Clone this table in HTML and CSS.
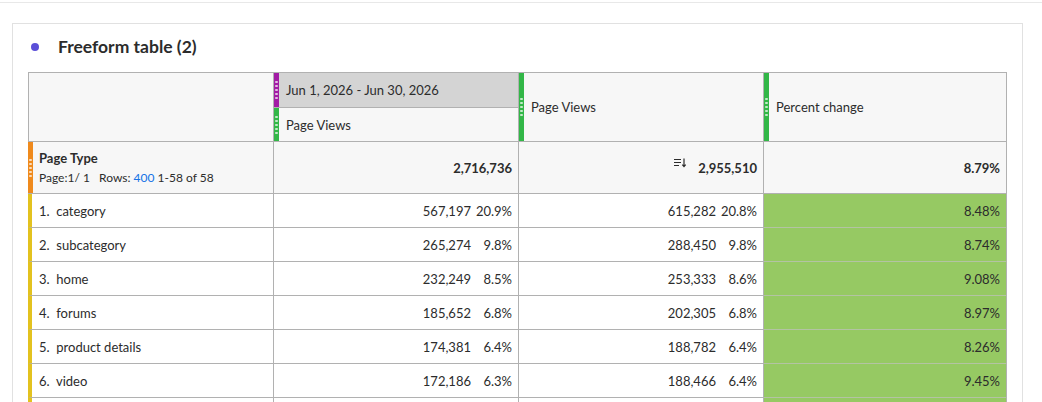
FILE: index.html
```html
<!DOCTYPE html>
<html>
<head>
<meta charset="utf-8">
<link rel="stylesheet" href="styles.css">
</head>
<body>
<div class="topline"></div>
<section class="panel">
  <header class="panel-head">
    <span class="dot"></span>
    <h2 class="title">Freeform table (2)</h2>
  </header>
  <div class="grid">
    <div class="cell corner"></div>
    <div class="cell hdr date"><span class="handle purple"><span class="dots"></span></span><span class="label">Jun 1, 2026 - Jun 30, 2026</span></div>
    <div class="cell hdr span2"><span class="handle green"><span class="dots"></span></span><span class="label">Page Views</span></div>
    <div class="cell hdr span2"><span class="handle green"><span class="dots"></span></span><span class="label">Percent change</span></div>
    <div class="cell hdr"><span class="handle green"><span class="dots"></span></span><span class="label">Page Views</span></div>

    <div class="cell dim"><span class="handle orange"><span class="dots"></span></span>
      <div class="dim-text">
        <div class="dim-name">Page Type</div>
        <div class="dim-meta">Page:1/ 1&nbsp;&nbsp; Rows: <span class="link">400</span> 1-58 of 58</div>
      </div>
    </div>
    <div class="cell total">2,716,736</div>
    <div class="cell total"><svg class="sort" width="13" height="10" viewBox="0 0 13 10"><path d="M0 1.5h7M0 4.5h7M0 7.5h5" stroke="#2c2c2c" stroke-width="1.2"/><path d="M10 0.5v8M8.3 6.6l1.7 2 1.7-2" stroke="#2c2c2c" stroke-width="1.2" fill="none"/></svg>2,955,510</div>
    <div class="cell total">8.79%</div>

    <div class="cell item">1.&nbsp; category</div>
    <div class="cell num">567,197<span class="pct">20.9%</span></div>
    <div class="cell num">615,282<span class="pct">20.8%</span></div>
    <div class="cell change">8.48%</div>

    <div class="cell item">2.&nbsp; subcategory</div>
    <div class="cell num">265,274<span class="pct">9.8%</span></div>
    <div class="cell num">288,450<span class="pct">9.8%</span></div>
    <div class="cell change">8.74%</div>

    <div class="cell item">3.&nbsp; home</div>
    <div class="cell num">232,249<span class="pct">8.5%</span></div>
    <div class="cell num">253,333<span class="pct">8.6%</span></div>
    <div class="cell change">9.08%</div>

    <div class="cell item">4.&nbsp; forums</div>
    <div class="cell num">185,652<span class="pct">6.8%</span></div>
    <div class="cell num">202,305<span class="pct">6.8%</span></div>
    <div class="cell change">8.97%</div>

    <div class="cell item">5.&nbsp; product details</div>
    <div class="cell num">174,381<span class="pct">6.4%</span></div>
    <div class="cell num">188,782<span class="pct">6.4%</span></div>
    <div class="cell change">8.26%</div>

    <div class="cell item">6.&nbsp; video</div>
    <div class="cell num">172,186<span class="pct">6.3%</span></div>
    <div class="cell num">188,466<span class="pct">6.4%</span></div>
    <div class="cell change">9.45%</div>

    <div class="cell item"></div>
    <div class="cell num"></div>
    <div class="cell num"></div>
    <div class="cell change"></div>
  </div>
</section>
</body>
</html>
```
FILE: styles.css
```css
* { box-sizing: border-box; }
html, body { margin: 0; padding: 0; background: #fff; }
body {
  font-family: Lato, "Open Sans", sans-serif;
  font-size: 13px;
  color: #2c2c2c;
  width: 1042px;
  height: 402px;
  overflow: hidden;
}
.topline {
  height: 3px;
  border-bottom: 1px solid #e8e8e8;
}
.panel {
  margin: 20px 0 0 12px;
  width: 1011px;
  border: 1px solid #e1e1e1;
  padding: 0 15px 20px 15px;
}
.panel-head {
  height: 48px;
  display: flex;
  align-items: center;
  padding-bottom: 4px;
}
.dot {
  width: 8px;
  height: 8px;
  border-radius: 50%;
  background: #5b4fd8;
  margin: 1px 19px 0 3px;
}
.title {
  margin: 0;
  font-size: 17.5px;
  font-weight: 700;
  color: #2c2c2c;
}
.grid {
  display: grid;
  grid-template-columns: 246px 245px 245px 243px;
  grid-template-rows: 35px 34px 52px;
  grid-auto-rows: 34px;
  border-top: 1px solid #b1b1b1;
}
.cell {
  border-right: 1px solid #b1b1b1;
  border-bottom: 1px solid #b1b1b1;
  display: flex;
  align-items: center;
  min-width: 0;
}
.corner {
  grid-row: span 2;
  background: #f7f7f7;
  border-left: 1px solid #b1b1b1;
}
.hdr { background: #f7f7f7; }
.hdr.date { background: #d4d4d4; }
.span2 { grid-row: span 2; }
.handle {
  align-self: stretch;
  width: 5px;
  flex: none;
  display: flex;
  align-items: center;
  justify-content: center;
}
.handle.purple { background: #a21ca5; }
.handle.green { background: #32b747; }
.handle.orange { background: #ef8a1d; }
.dots {
  width: 5px;
  height: 20px;
  background-image: radial-gradient(circle at center, rgba(255,255,255,0.7) 1px, transparent 1.5px);
  background-size: 5px 4px;
  background-repeat: repeat-y;
}
.label { padding-left: 7px; white-space: nowrap; }
.dim {
  background: #f7f7f7;
}
.dim-text { padding-left: 6px; }
.dim-name { font-weight: 700; font-size: 13px; line-height: 16px; }
.dim-meta { font-size: 12px; line-height: 16px; margin-top: 4px; }
.link { color: #1473e6; }
.total {
  background: #f7f7f7;
  justify-content: flex-end;
  padding-right: 6px;
  font-weight: 700;
}
.sort {
  margin-right: 11px;
  position: relative;
  top: -5px;
}
.item {
  border-left: 4px solid #e3c21f;
  padding-left: 7px;
}
.num {
  justify-content: flex-end;
  padding-right: 6px;
}
.pct {
  display: inline-block;
  width: 41px;
  text-align: right;
}
.change {
  background: #96c963;
  justify-content: flex-end;
  padding-right: 6px;
  border-bottom-color: #b3c3a3;
}
```
